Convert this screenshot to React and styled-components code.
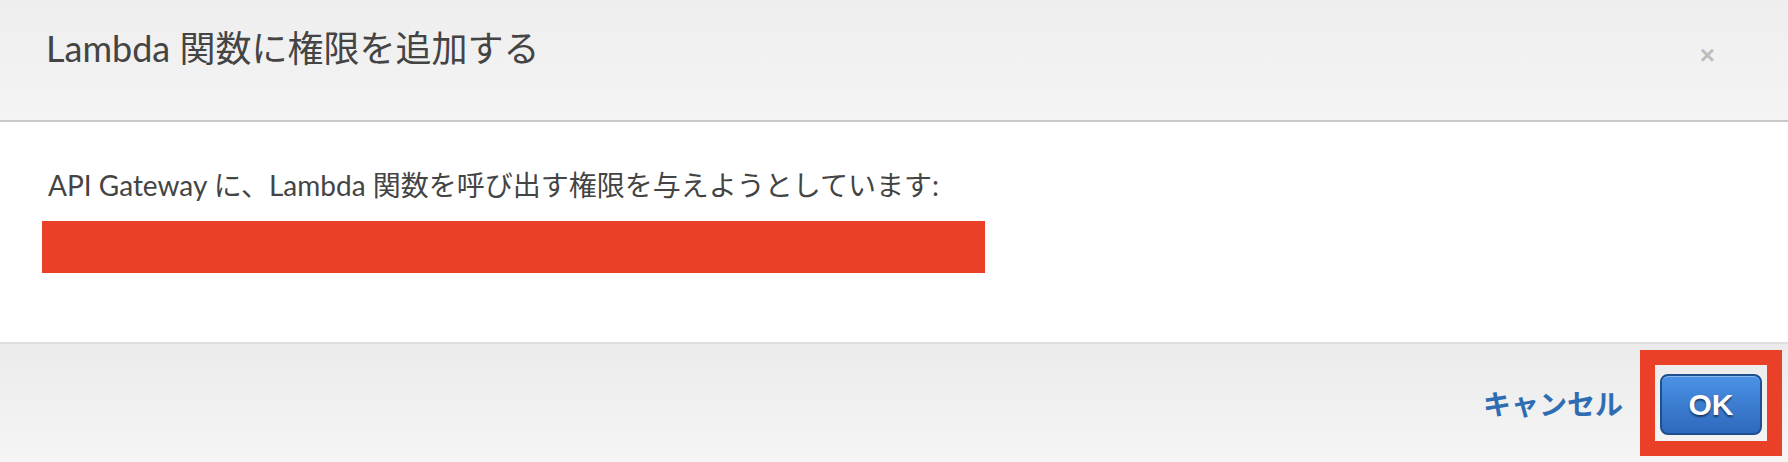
import React from "react";
import styled, { createGlobalStyle } from "styled-components";

const GlobalStyle = createGlobalStyle`
  html, body {
    margin: 0;
    padding: 0;
    background: #ffffff;
  }
  body {
    font-family: "Lato", "Noto Sans CJK JP", sans-serif;
    color: #444444;
  }
`;

const Modal = styled.div`
  width: 1788px;
  height: 462px;
  display: flex;
  flex-direction: column;
  overflow: hidden;
`;

const Header = styled.div`
  height: 122px;
  box-sizing: border-box;
  flex-shrink: 0;
  display: flex;
  align-items: flex-start;
  justify-content: space-between;
  padding: 28px 0 0 46px;
  background: linear-gradient(#eeeeee, #f4f4f4);
  border-bottom: 2px solid #c9c9c9;
`;

const Title = styled.h2`
  margin: 0;
  font-family: "Lato", "Noto Sans CJK JP", sans-serif;
  font-size: 36px;
  font-weight: 400;
  line-height: 40px;
  color: #444444;
`;

const Close = styled.button`
  margin: 12px 73px 0 0;
  padding: 0;
  border: none;
  background: none;
  font-family: "Liberation Sans", sans-serif;
  font-size: 26px;
  font-weight: 700;
  line-height: 30px;
  color: #bdbdbd;
  cursor: pointer;
`;

const Body = styled.div`
  flex: 1;
  background: #ffffff;
  padding: 47px 42px 0;
  box-sizing: border-box;
`;

const Message = styled.p`
  margin: 0 0 20px 6px;
  font-size: 28px;
  line-height: 32px;
  color: #444444;
`;

const Redacted = styled.div`
  width: 943px;
  height: 52px;
  background: #ea4027;
`;

const Footer = styled.div`
  height: 120px;
  box-sizing: border-box;
  flex-shrink: 0;
  display: flex;
  align-items: center;
  justify-content: flex-end;
  gap: 17px;
  padding-right: 6px;
  border-top: 2px solid #dedede;
  background: linear-gradient(#ebebeb, #f5f5f5);
`;

const CancelLink = styled.a`
  font-family: "Noto Sans CJK JP", sans-serif;
  font-size: 28px;
  font-weight: 700;
  color: #2f6db3;
  text-decoration: none;
  cursor: pointer;
`;

const Highlight = styled.div`
  border: 15px solid #ea4027;
  padding: 9px 5px 6px;
  display: flex;
`;

const PrimaryButton = styled.button`
  width: 102px;
  height: 61px;
  box-sizing: border-box;
  border: 2px solid #1e4f8e;
  border-radius: 8px;
  background: linear-gradient(#4b92e5, #2e69bd);
  box-shadow: inset 0 1px 0 rgba(255, 255, 255, 0.35);
  font-family: "Liberation Sans", "Noto Sans", sans-serif;
  font-size: 30px;
  font-weight: 700;
  color: #ffffff;
  text-shadow: 0 2px 2px rgba(0, 0, 0, 0.5);
  cursor: pointer;
`;

export default function App() {
  return (
    <>
      <GlobalStyle />
      <Modal>
        <Header>
          <Title>Lambda 関数に権限を追加する</Title>
          <Close aria-label="閉じる">×</Close>
        </Header>
        <Body>
          <Message>API Gateway に、Lambda 関数を呼び出す権限を与えようとしています:</Message>
          <Redacted />
        </Body>
        <Footer>
          <CancelLink>キャンセル</CancelLink>
          <Highlight>
            <PrimaryButton>OK</PrimaryButton>
          </Highlight>
        </Footer>
      </Modal>
    </>
  );
}
